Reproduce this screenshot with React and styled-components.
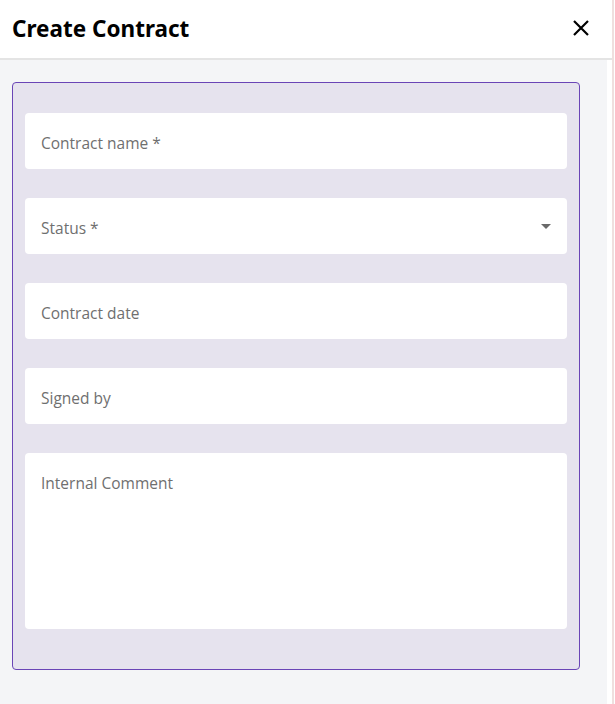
import React from 'react';
import styled, { createGlobalStyle } from 'styled-components';

const GlobalStyle = createGlobalStyle`
  html, body {
    margin: 0;
    padding: 0;
    background: #ffffff;
  }
  * {
    box-sizing: border-box;
  }
`;

const Page = styled.div`
  display: flex;
  width: 615px;
  height: 704px;
  font-family: 'Open Sans', 'Liberation Sans', sans-serif;
`;

const Drawer = styled.aside`
  display: flex;
  flex-direction: column;
  width: 612px;
  height: 100%;
`;

const Edge = styled.div`
  width: 2px;
  height: 100%;
  background: #efdfdf;
`;

const Header = styled.header`
  display: flex;
  align-items: center;
  justify-content: space-between;
  height: 60px;
  padding: 0 23px 2px 12px;
  background: #ffffff;
  border-bottom: 2px solid #e4e4e4;
`;

const Title = styled.h2`
  margin: 0;
  font-family: 'Noto Sans', 'Liberation Sans', sans-serif;
  font-size: 22.5px;
  font-weight: 700;
  color: #000000;
`;

const CloseButton = styled.button`
  display: flex;
  padding: 0;
  border: none;
  background: none;
  cursor: pointer;
`;

const Body = styled.div`
  flex: 1;
  width: 607px;
  padding: 22px 27px 0 12px;
  background: #f4f5f7;
`;

const Form = styled.form`
  display: flex;
  flex-direction: column;
  gap: 29px;
  padding: 30px 12px 40px 12px;
  background: #e6e3ee;
  border: 1px solid #6a45b6;
  border-radius: 4px;
`;

const Field = styled.div`
  position: relative;
  display: flex;
  align-items: ${(p) => (p.$multiline ? 'flex-start' : 'center')};
  height: ${(p) => (p.$multiline ? '176px' : '56px')};
  padding: ${(p) => (p.$multiline ? '19px 16px' : '3px 16px 0')};
  background: #ffffff;
  border-radius: 4px;
`;

const Label = styled.span`
  font-size: 15.5px;
  color: #6f6f6f;
  line-height: 22px;
`;

const Caret = styled.span`
  position: absolute;
  right: 16px;
  top: 26px;
  width: 0;
  height: 0;
  border-left: 5px solid transparent;
  border-right: 5px solid transparent;
  border-top: 5px solid #6a6a6a;
`;

const fields = [
  { label: 'Contract name *' },
  { label: 'Status *', select: true },
  { label: 'Contract date' },
  { label: 'Signed by' },
  { label: 'Internal Comment', multiline: true },
];

export default function App() {
  return (
    <>
      <GlobalStyle />
      <Page>
        <Drawer>
          <Header>
            <Title>Create Contract</Title>
            <CloseButton aria-label="close">
              <svg width="16" height="16" viewBox="0 0 16 16">
                <path d="M1 1L15 15M15 1L1 15" stroke="#000" strokeWidth="2.2" />
              </svg>
            </CloseButton>
          </Header>
          <Body>
            <Form>
              {fields.map((f) => (
                <Field key={f.label} $multiline={f.multiline}>
                  <Label>{f.label}</Label>
                  {f.select && <Caret />}
                </Field>
              ))}
            </Form>
          </Body>
        </Drawer>
        <Edge />
      </Page>
    </>
  );
}
